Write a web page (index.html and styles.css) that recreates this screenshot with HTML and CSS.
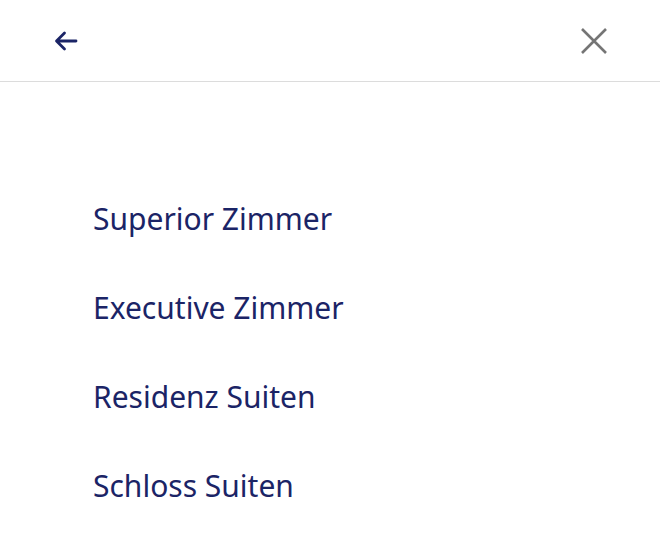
FILE: index.html
```html
<!DOCTYPE html>
<html lang="de">
<head>
    <meta charset="UTF-8">
    <meta name="viewport" content="width=device-width, initial-scale=1.0">
    <title>Zimmer &amp; Suiten</title>
    <link rel="stylesheet" href="styles.css">
</head>
<body>
    <header class="topbar">
        <button class="icon-btn back" aria-label="Zurück">
            <svg width="26" height="22" viewBox="0 0 26 22">
                <path d="M23 11H4M11.5 3L3.5 11L11.5 19" fill="none" stroke="#1b2466" stroke-width="2.8" stroke-linecap="round" stroke-linejoin="round"/>
            </svg>
        </button>
        <button class="icon-btn close" aria-label="Schließen">
            <svg width="28" height="28" viewBox="0 0 28 28">
                <path d="M2 2L26 26M26 2L2 26" fill="none" stroke="#757575" stroke-width="2.6"/>
            </svg>
        </button>
    </header>

    <nav class="menu">
        <a href="#">Superior Zimmer</a>
        <a href="#">Executive Zimmer</a>
        <a href="#">Residenz Suiten</a>
        <a href="#">Schloss Suiten</a>
    </nav>
</body>
</html>
```

FILE: styles.css
```css
body {
    margin: 0;
    font-family: "Noto Sans", "Open Sans", sans-serif;
    background-color: #fff;
}

.topbar {
    height: 81px;
    display: flex;
    justify-content: space-between;
    align-items: center;
    padding: 0 52px 0 53px;
    border-bottom: 1px solid #dcdcdc;
}

.icon-btn {
    border: none;
    background: none;
    padding: 0;
    display: flex;
    cursor: pointer;
}

.menu {
    display: flex;
    flex-direction: column;
    padding: 112px 0 0 93px;
    gap: 40px;
}

.menu a {
    color: #1b2466;
    text-decoration: none;
    font-size: 30px;
    line-height: 49px;
}
```
